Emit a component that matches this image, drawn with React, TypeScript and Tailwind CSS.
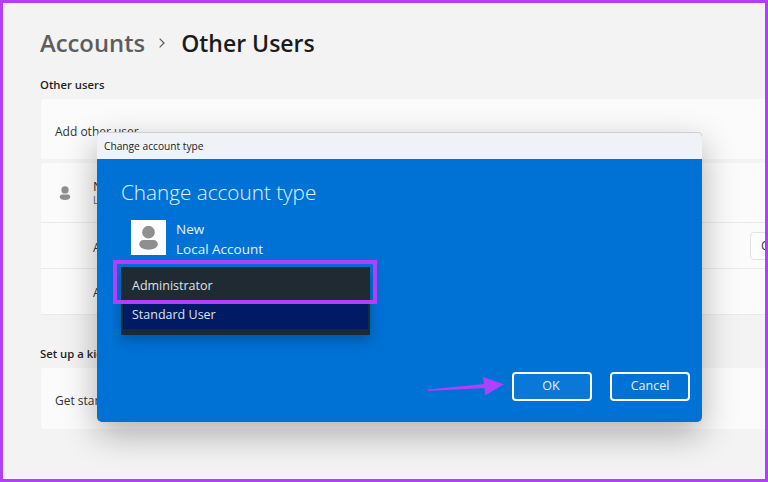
import * as React from "react"

const font = { fontFamily: '"Open Sans", "Noto Sans", sans-serif' }

function PersonIcon({ className }: { className?: string }) {
    return (
        <svg viewBox="0 0 36 36" className={className} fill="#8f8f8f">
            <circle cx="18" cy="12.5" r="6.5" />
            <path d="M8.5 25c0-3 2-4.500 4.500-4.500h10c2.500 0 4.500 1.500 4.500 4.500 0 3.500-4.500 5.500-9.500 5.500s-9.500-2-9.500-5.500z" />
        </svg>
    )
}

function SettingsRow({ children, className }: { children: React.ReactNode; className?: string }) {
    return <div className={`flex items-center border-b border-[#e9e9e9] pl-[52px] text-[12px] text-[#333] ${className}`}>{children}</div>
}

export default function App() {
    return (
        <div className="relative h-[482px] w-[768px] overflow-hidden border-[3px] border-[#b13ffb] bg-[#f3f3f3]" style={font}>
            {/* settings page behind the dialog */}
            <div className="w-[900px] pl-[37px] pt-[23px]">
                <div className="flex h-[34px] items-center font-semibold leading-[34px]">
                    <span className="text-[23.800px] text-[#5d5d5d]">Accounts</span>
                    <svg viewBox="0 0 10 14" className="ml-[13px] mr-[15px] h-[12px] w-[8px]" fill="none" stroke="#5d5d5d" strokeWidth="1.6">
                        <path d="M2 1.500 7.500 7 2 12.500" />
                    </svg>
                    <span className="text-[23px] text-[#1b1b1b]">Other Users</span>
                </div>
                <div className="mt-[16px] h-[23px] text-[11.300px] font-semibold leading-[18px] text-[#1f1f1f]">Other users</div>

                <div className="ml-[1px] flex h-[60px] items-center rounded-[3px] bg-[#fbfbfb] pl-[14px] pt-[6px] text-[12px] text-[#333]">Add other user</div>

                <div className="ml-[1px] mt-[4px] rounded-[3px] bg-[#fbfbfb]">
                    <div className="flex h-[60px] items-center border-b border-[#e9e9e9] pl-[14px]">
                        <PersonIcon className="h-[20px] w-[20px]" />
                        <div className="ml-[18px] text-[#333]">
                            <div className="text-[13px] leading-[15px]">New</div>
                            <div className="text-[10px] leading-[13px] text-[#666]">Local Account</div>
                        </div>
                    </div>
                    <SettingsRow className="h-[46px] pt-[4px]">
                        <span className="w-[657px] shrink-0">Account options</span>
                        <span className="-mt-[4px] flex h-[28px] w-[140px] items-center rounded-[4px] border border-[#e3e3e3] bg-white pl-[10px]">Change account type</span>
                    </SettingsRow>
                    <SettingsRow className="h-[46px] pt-[3px]">Account and data</SettingsRow>
                </div>

                <div className="mt-[30px] h-[23px] text-[11.300px] font-semibold leading-[18px] text-[#1f1f1f]">Set up a kiosk</div>
                <div className="ml-[1px] flex h-[61px] items-center rounded-[3px] bg-[#fbfbfb] pl-[14px] pt-[4px] text-[12px] text-[#333]">Get started</div>
            </div>

            {/* dialog */}
            <div className="absolute left-[94px] top-[129px] flex h-[290px] w-[605px] flex-col overflow-hidden rounded-[5px] bg-[#0071d5] shadow-[0_12px_34px_rgba(0,0,0,0.3)]">
                <div className="flex h-[27px] shrink-0 items-center border-t border-[#cfcfcf] bg-[#eff3f8] pl-[7px] pt-[2px] text-[10.200px] text-[#222]">Change account type</div>
                <div className="relative flex flex-1 flex-col pl-[24px] text-white">
                    <div className="mt-[18px] text-[20.700px] font-light leading-[30px] text-[#e6f1fb]">Change account type</div>
                    <div className="ml-[10px] mt-[13px] flex h-[35px] items-start">
                        <div className="flex h-[35px] w-[35px] items-center justify-center bg-white">
                            <PersonIcon className="h-[35px] w-[35px]" />
                        </div>
                        <div className="-mt-[1px] ml-[10px] text-[13.500px] leading-[20px] text-[#e6f1fb]">
                            <div>New</div>
                            <div>Local Account</div>
                        </div>
                    </div>
                    <div className="mt-[12px] h-[68px] w-[249px] bg-[#1c2a38] shadow-[0_5px_12px_rgba(0,0,0,0.25)]">
                        <div className="flex h-[36px] items-center bg-[#1f2a33] pl-[11px] pt-[2px] text-[12.500px] text-[#dfe3e6]">Administrator</div>
                        <div className="mx-[2px] flex h-[26px] items-center bg-[#001a66] pb-[2px] pl-[9px] text-[12.500px] text-[#dfe3ee]">Standard User</div>
                    </div>
                    <div className="absolute bottom-[21px] right-[12px] flex gap-[18px]">
                        <div className="flex h-[29px] w-[80px] items-center justify-center rounded-[4px] border-2 border-white bg-[#0a78d8] pr-[2px] text-[12.500px] text-[#e6f1fb]">OK</div>
                        <div className="flex h-[29px] w-[80px] items-center justify-center rounded-[4px] border-2 border-white text-[12.500px] text-[#e6f1fb]">Cancel</div>
                    </div>
                </div>
            </div>

            {/* annotations */}
            <div className="absolute left-[110px] top-[257px] h-[44px] w-[264px] border-4 border-[#b13ffb]" />
            <svg viewBox="0 0 80 24" className="absolute left-[425px] top-[373px] h-[24px] w-[80px]" fill="#b13ffb">
                <path d="M0 13.500 56 8 55 1 76 8.300 57 19.500 56.500 12 0 15Z" />
            </svg>
        </div>
    )
}
